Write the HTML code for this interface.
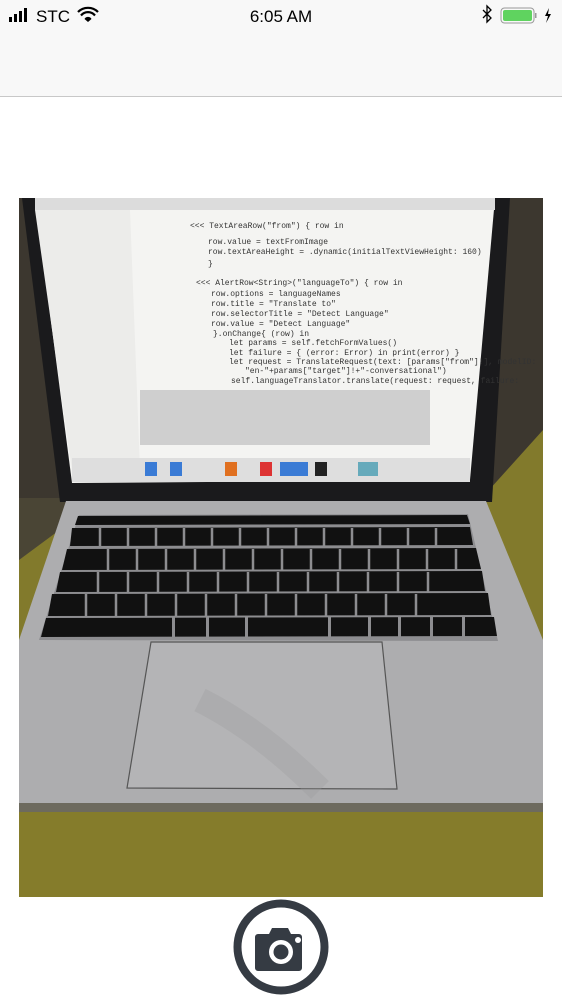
<!DOCTYPE html>
<html><head><meta charset="utf-8"><style>
html,body{margin:0;padding:0;width:562px;height:1000px;overflow:hidden;background:#fff;font-family:"Liberation Sans",sans-serif}
.bar{position:absolute;left:0;top:0;width:562px;height:96px;background:#f8f8f8;border-bottom:1px solid #c8c8c8}
svg{position:absolute;left:0;top:0}
</style></head><body>
<div class="bar"></div>
<svg width="562" height="1000" viewBox="0 0 562 1000">
<g fill="#000">
<rect x="9" y="17" width="3" height="5"/><rect x="14" y="14" width="3" height="8"/><rect x="19" y="11" width="3" height="11"/><rect x="24" y="8" width="3" height="14"/>
<text x="36" y="22" font-size="17" font-family="Liberation Sans">STC</text>
<text x="281" y="22" font-size="17" text-anchor="middle" font-family="Liberation Sans">6:05 AM</text>
<path d="M549 8 l-4 8 h3 l-2 7 l5-9 h-3 z"/>
</g>
<path d="M483 10 l8 8 l-4 4 v-16 l4 4 l-8 8" stroke="#000" stroke-width="1.3" fill="none"/>
<path d="M78 12 a14 14 0 0 1 20 0" stroke="#000" stroke-width="2.2" fill="none"/>
<path d="M81 15.5 a9 9 0 0 1 14 0" stroke="#000" stroke-width="2.2" fill="none"/>
<path d="M84.5 19 a4 4 0 0 1 7 0 l-3.5 3z" fill="#000"/>
<rect x="501" y="8" width="33" height="15" rx="3.5" fill="none" stroke="#999" stroke-width="1"/>
<rect x="503" y="10" width="29" height="11" rx="2" fill="#5fd35f"/>
<rect x="535" y="13" width="1.5" height="5" fill="#999"/>

<clipPath id="c"><rect x="19" y="198" width="524" height="699"/></clipPath>
<g clip-path="url(#c)">
<rect x="19" y="198" width="524" height="699" fill="#4a4535"/>
<rect x="19" y="198" width="524" height="300" fill="#3c372f"/>
<polygon points="19,560 100,500 480,500 543,430 543,897 19,897" fill="#827a2c"/>
<polygon points="19,800 543,800 543,897 19,897" fill="#857c2b"/>
<polygon points="22,198 510,198 492,502 60,502" fill="#1a1a1c"/>
<polygon points="35,198 495,198 470,480 72,483" fill="#f4f4f2"/>
<rect x="35" y="198" width="460" height="12" fill="#dcdcdc"/>
<polygon points="35,210 130,210 140,470 72,470" fill="#ececea"/>
<rect x="140" y="390" width="290" height="55" fill="#cfcfcf"/>
<rect x="72" y="458" width="398" height="24" fill="#dedede"/>
<g fill="#3a7bd5"><rect x="145" y="462" width="12" height="14"/><rect x="170" y="462" width="12" height="14"/><rect x="225" y="462" width="12" height="14" fill="#e07020"/><rect x="260" y="462" width="12" height="14" fill="#d33"/><rect x="280" y="462" width="28" height="14"/><rect x="315" y="462" width="12" height="14" fill="#222"/><rect x="358" y="462" width="20" height="14" fill="#6ab"/></g>
<g font-family="Liberation Mono" font-size="8" fill="#333">
<text x="190" y="228">&lt;&lt;&lt; TextAreaRow("from") { row in</text>
<text x="208" y="244">row.value = textFromImage</text>
<text x="208" y="254">row.textAreaHeight = .dynamic(initialTextViewHeight: 160)</text>
<text x="208" y="266">}</text>
<text x="196" y="285">&lt;&lt;&lt; AlertRow&lt;String&gt;("languageTo") { row in</text>
<text x="211" y="296">row.options = languageNames</text>
<text x="211" y="306">row.title = "Translate to"</text>
<text x="211" y="316">row.selectorTitle = "Detect Language"</text>
<text x="211" y="326">row.value = "Detect Language"</text>
<text x="213" y="336">}.onChange{ (row) in</text>
<text x="229" y="345">let params = self.fetchFormValues()</text>
<text x="229" y="355">let failure = { (error: Error) in print(error) }</text>
<text x="229" y="364">let request = TranslateRequest(text: [params["from"]!], modelID:</text>
<text x="245" y="373">"en-"+params["target"]!+"-conversational")</text>
<text x="231" y="383">self.languageTranslator.translate(request: request, failure:</text>
</g>
<polygon points="66,501 486,501 543,640 543,803 19,803 19,640" fill="#adadaf"/>
<polygon points="19,803 543,803 543,812 19,812" fill="#6d6a5e"/>
<polygon points="79,515 468,514 498,641 39,640" fill="#8d8d90"/>
<g fill="#111">
<polygon points="78,516 467,515 470,524 75,525"/>
<polygon points="72,528 470,527 473,545 70,546"/>
<polygon points="67,549 476,548 481,569 62,570"/>
<polygon points="60,572 482,571 485,591 56,592"/>
<polygon points="52,594 488,593 491,615 48,616"/>
<polygon points="46,618 494,617 497,636 41,637"/>
</g>
<g fill="#8d8d90">
<rect x="172" y="616" width="3" height="22"/><rect x="206" y="616" width="3" height="22"/><rect x="245" y="616" width="3" height="22"/>
<rect x="328" y="616" width="3" height="22"/><rect x="368" y="616" width="3" height="22"/><rect x="398" y="616" width="3" height="22"/><rect x="430" y="616" width="3" height="22"/><rect x="462" y="616" width="3" height="22"/>
</g>
<g stroke="#8d8d90" stroke-width="2.5">
<path d="M100 528v18M128 528v18M156 528v18M184 528v18M212 528v18M240 528v18M268 528v18M296 528v18M324 528v18M352 528v18M380 528v18M408 528v18M436 528v18"/>
<path d="M108 549v21M137 549v21M166 549v21M195 549v21M224 549v21M253 549v21M282 549v21M311 549v21M340 549v21M369 549v21M398 549v21M427 549v21M456 549v21"/>
<path d="M98 572v20M128 572v20M158 572v20M188 572v20M218 572v20M248 572v20M278 572v20M308 572v20M338 572v20M368 572v20M398 572v20M428 572v20"/>
<path d="M86 594v22M116 594v22M146 594v22M176 594v22M206 594v22M236 594v22M266 594v22M296 594v22M326 594v22M356 594v22M386 594v22M416 594v22"/>
</g>
<polygon points="151,642 382,642 397,789 127,788" fill="#b4b4b6" stroke="#555" stroke-width="1.2"/>
<path d="M200 700 q60 30 120 90" stroke="#9a9a9c" stroke-width="25" fill="none" opacity=".3"/>
</g>

<circle cx="281" cy="947" r="43.5" fill="none" stroke="#353b43" stroke-width="8"/>
<path d="M255 937 a3 3 0 0 1 3-3 h11 l3-6 h16 l3 6 h8 a3 3 0 0 1 3 3 v31 a3 3 0 0 1-3 3 h-41 a3 3 0 0 1-3-3z" fill="#353b43"/>
<circle cx="281" cy="952" r="12" fill="#fff"/>
<circle cx="281" cy="952" r="7.5" fill="#353b43"/>
<circle cx="298" cy="940" r="3" fill="#fff"/>
</svg>
</body></html>
